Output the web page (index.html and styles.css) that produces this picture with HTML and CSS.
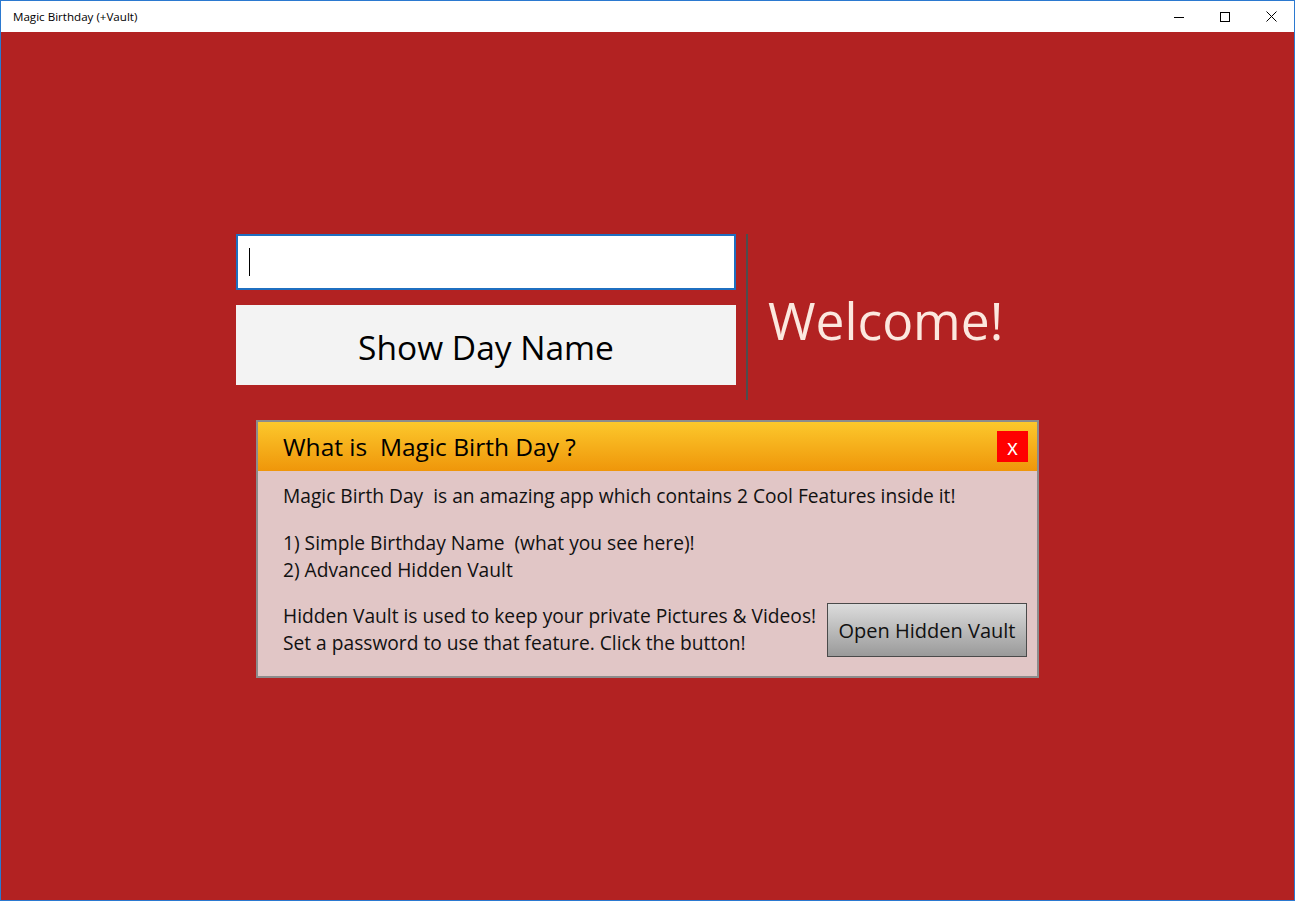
FILE: index.html
```html
<!DOCTYPE html>
<html lang="en">
<head>
    <meta charset="UTF-8">
    <title>Magic Birthday (+Vault)</title>
    <link rel="stylesheet" href="styles.css">
</head>
<body>
<div class="window">
    <div class="titlebar">
        <span class="title">Magic Birthday (+Vault)</span>
        <div class="caption-buttons">
            <span class="cap-btn">
                <svg width="10" height="10" viewBox="0 0 10 10"><path d="M0 5.5h10" stroke="#000" stroke-width="1"/></svg>
            </span>
            <span class="cap-btn">
                <svg width="10" height="10" viewBox="0 0 10 10"><rect x="0.5" y="0.5" width="9" height="9" fill="none" stroke="#000" stroke-width="1"/></svg>
            </span>
            <span class="cap-btn">
                <svg width="11" height="11" viewBox="0 0 11 11"><path d="M0.5 0.5l10 10M10.5 0.5l-10 10" stroke="#000" stroke-width="1"/></svg>
            </span>
        </div>
    </div>

    <div class="content">
        <div class="top-row">
            <div class="birth-form">
                <div class="date-input"><span class="caret"></span></div>
                <button class="show-btn">Show Day Name</button>
            </div>
            <div class="divider"></div>
            <div class="welcome">Welcome!</div>
        </div>

        <div class="info-panel">
            <div class="panel-header">
                <span class="panel-title">What is&nbsp; Magic Birth Day ?</span>
                <button class="close-btn">x</button>
            </div>
            <div class="panel-body">
                <p>Magic Birth Day&nbsp; is an amazing app which contains 2 Cool Features inside it!</p>
                <p>1) Simple Birthday Name&nbsp; (what you see here)!<br>2) Advanced Hidden Vault</p>
                <div class="vault-row">
                    <p>Hidden Vault is used to keep your private Pictures &amp; Videos!<br>Set a password to use that feature. Click the button!</p>
                    <button class="vault-btn">Open Hidden Vault</button>
                </div>
            </div>
        </div>
    </div>
</div>
</body>
</html>
```
FILE: styles.css
```css
body {
    margin: 0;
    padding: 0;
    font-family: "Open Sans", "Noto Sans", sans-serif;
    overflow: hidden;
}
.window {
    width: 1295px;
    height: 901px;
    box-sizing: border-box;
    border: 1px solid #2b79d0;
    display: flex;
    flex-direction: column;
    background-color: #b22222;
}
.titlebar {
    height: 31px;
    background-color: #fff;
    display: flex;
    align-items: center;
    justify-content: space-between;
}
.title {
    font-size: 11.6px;
    margin-left: 12px;
    color: #000;
}
.caption-buttons {
    display: flex;
    height: 100%;
}
.cap-btn {
    width: 46px;
    display: flex;
    align-items: center;
    justify-content: center;
}
.content {
    flex: 1;
    padding: 202px 0 0 235px;
}
.top-row {
    display: flex;
    align-items: flex-start;
}
.birth-form {
    width: 500px;
    display: flex;
    flex-direction: column;
    gap: 15px;
}
.date-input {
    height: 56px;
    box-sizing: border-box;
    border: 2px solid #1f6fc0;
    background-color: #fff;
    display: flex;
    align-items: center;
    padding-left: 11px;
}
.caret {
    width: 1px;
    height: 28px;
    background-color: #000;
}
.show-btn {
    height: 80px;
    border: none;
    background-color: #f3f3f3;
    font-family: "Open Sans", "Noto Sans", sans-serif;
    font-size: 33.5px;
    color: #000;
    padding: 4px 0 0 0;
}
.divider {
    width: 2px;
    height: 166px;
    margin-left: 10px;
    background-color: #4d4d4d;
}
.welcome {
    margin-left: 20px;
    margin-top: 50px;
    font-size: 51.5px;
    color: #fce8df;
    line-height: 72px;
}
.info-panel {
    margin: 20px 0 0 20px;
    width: 783px;
    height: 258px;
    box-sizing: border-box;
    border: 2px solid #8c8c8c;
    background-color: #e1c6c6;
    display: flex;
    flex-direction: column;
}
.panel-header {
    height: 49px;
    background: linear-gradient(#fcc82c, #ef960a);
    display: flex;
    align-items: center;
    justify-content: space-between;
    padding: 0 9px 0 25px;
}
.panel-title {
    font-size: 24.5px;
    color: #000;
}
.close-btn {
    width: 31px;
    height: 31px;
    border: none;
    background-color: #ff0000;
    color: #fff;
    font-family: "Open Sans", "Noto Sans", sans-serif;
    font-size: 21px;
    line-height: 26px;
    padding: 0;
}
.panel-body {
    padding: 11px 10px 0 25px;
    font-size: 19.2px;
    color: #111;
    line-height: 27px;
}
.panel-body p {
    margin: 0 0 20px 0;
}
.vault-row {
    display: flex;
    align-items: center;
    justify-content: space-between;
    margin-top: -2px;
}
.vault-row p {
    margin: 0;
}
.vault-btn {
    width: 200px;
    height: 54px;
    margin-top: 2px;
    border: 1px solid #4a4a4a;
    background: linear-gradient(#dcdcdc, #9a9a9a);
    font-family: "Open Sans", "Noto Sans", sans-serif;
    font-size: 20px;
    color: #111;
    padding: 0;
}
```
